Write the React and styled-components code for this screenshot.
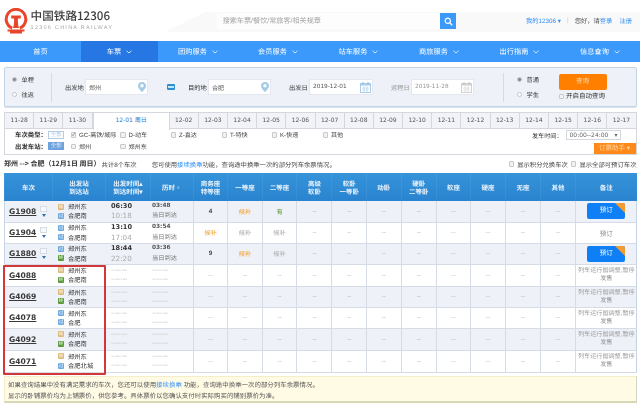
import React from 'react';
import styled, { createGlobalStyle } from 'styled-components';

const Global = createGlobalStyle`
  html, body { margin: 0; padding: 0; background: #fff; }
  body { font-family: "Liberation Sans", "Noto Sans CJK SC", sans-serif; width: 640px; height: 410px; overflow: hidden; text-rendering: geometricPrecision; }
  * { box-sizing: border-box; }
`;

const Page = styled.div`
  position: relative;
  width: 640px;
  height: 410px;
  overflow: hidden;
  color: #333;
  font-size: 6.5px;
  filter: blur(0.25px);
`;

const Header = styled.header`
  position: relative;
  isolation: isolate;
  height: 41px;
  display: flex;
  align-items: center;
  padding-left: 4px;
  &::before {
    content: '';
    position: absolute;
    z-index: -1;
    left: 165px;
    top: 12px;
    width: 475px;
    height: 20px;
    background: #f9f9f9;
    clip-path: polygon(40px 0, 100% 0, 100% 100%, 0 100%);
  }
`;
const LogoBox = styled.div`
  display: flex;
  align-items: center;
  gap: 2.6px;
  width: 212.7px;
`;
const LogoText = styled.div`
  display: flex;
  flex-direction: column;
`;
const LogoTitle = styled.div`
  font-family: "Noto Sans CJK SC", sans-serif;
  font-size: 11.6px;
  line-height: 15.5px;
  font-weight: 500;
  white-space: nowrap;
  color: #3d3d3d;
`;
const LogoSub = styled.div`
  font-size: 5.5px;
  line-height: 7px;
  letter-spacing: 1.25px;
  white-space: nowrap;
  color: #a8a8a8;
`;
const SearchBar = styled.div`
  display: flex;
  width: 239.5px;
  height: 16px;
  margin-top: 1px;
`;
const SearchInput = styled.div`
  flex: 1;
  padding-left: 6px;
  font-size: 7.1px;
  line-height: 16px;
  color: #a4a4a4;
  background: #fdfdfd;
`;
const SearchBtn = styled.div`
  width: 16px;
  height: 16px;
  background: #3b99fc;
  display: flex;
  align-items: center;
  justify-content: center;
`;
const TopLinks = styled.div`
  position: relative;
  margin-left: auto;
  margin-right: 8px;
  display: flex;
  align-items: center;
  white-space: nowrap;
  font-size: 6.3px;
  color: #444;
`;
const Link = styled.span`
  color: #2f8ff5;
`;
const Sep = styled.span`
  margin: 0 6px;
  color: #ccc;
`;
const LinkGap = styled(Link)`
  margin-left: 7px;
`;

const Nav = styled.nav`
  height: 21px;
  display: flex;
  background: #3b99fc;
`;
const NavItem = styled.div`
  width: ${p => p.$w}px;
  display: flex;
  align-items: center;
  justify-content: center;
  gap: 5px;
  font-size: 7.2px;
  color: #fff;
  background: ${p => (p.$active ? '#2676e3' : 'transparent')};
`;

const Panel = styled.section`
  margin: 5px 3.5px 0 4px;
  height: 40px;
  display: flex;
  align-items: center;
  background: #eef1f8;
  border: 1px solid #c3d4e6;
  border-radius: 2px;
  box-shadow: 0 1px 1px #d8e0e8;
`;
const RadioCol = styled.div`
  width: ${p => p.$w}px;
  height: 29px;
  margin-left: ${p => p.$ml || 0}px;
  padding-left: ${p => p.$pad}px;
  display: flex;
  flex-direction: column;
  justify-content: space-around;
  ${p => p.$right && 'border-right: 1px solid #d3dbe6;'}
  ${p => p.$left && 'border-left: 1px solid #d3dbe6;'}
`;
const RadioRow = styled.label`
  display: flex;
  align-items: center;
  gap: 4.5px;
  font-size: 6.2px;
  color: #333;
`;
const Radio = styled.i`
  width: 5px;
  height: 5px;
  border-radius: 50%;
  border: 1px solid #c5c5c5;
  background: ${p => (p.$on ? '#8b8b8b' : '#fff')};
`;
const Field = styled.div`
  display: flex;
  align-items: center;
  margin-left: ${p => p.$ml}px;
`;
const FieldLabel = styled.span`
  width: 20px;
  font-size: 6.3px;
  color: ${p => (p.$dim ? '#999' : '#333')};
  white-space: nowrap;
`;
const FieldBox = styled.div`
  width: ${p => p.$w}px;
  height: 16px;
  padding: 0 1.5px 0 3px;
  display: flex;
  align-items: center;
  justify-content: space-between;
  background: #fff;
  border: 1px solid #e4e8ee;
  font-size: 6px;
  color: ${p => (p.$dim ? '#999' : '#555')};
`;
const DateText = styled.span`
  font-family: "DejaVu Sans", sans-serif;
  font-size: 5.8px;
`;
const SwapIcon = styled.div`
  margin-left: 19px;
  width: 8px;
  height: 6px;
  border-radius: 1px;
  background: #2f8fd0;
  display: flex;
  align-items: center;
  justify-content: center;
  &::after {
    content: '';
    width: 6px;
    height: 2px;
    background: #bfe6f5;
  }
`;
const QueryCol = styled.div`
  display: flex;
  flex-direction: column;
  gap: 3px;
`;
const QueryBtn = styled.div`
  width: 48px;
  height: 16px;
  background: #ff7f00;
  border-radius: 2px;
  color: #ffdcb0;
  font-size: 6.5px;
  text-align: center;
  line-height: 16px;
`;
const Auto = styled.div`
  display: flex;
  align-items: center;
  gap: 2px;
  font-size: 6.5px;
  line-height: 7px;
  white-space: nowrap;
  color: #333;
`;
const Check = styled.i`
  flex: none;
  width: 5.5px;
  height: 5.5px;
  background: #f2f2f2;
  border: 1px solid #c8c8c8;
  border-radius: 1px;
  font-style: normal;
  font-size: 5px;
  line-height: 4px;
  color: #555;
  text-align: center;
`;

const Tabs = styled.div`
  margin: 5px 3.5px 0 4px;
  height: 16px;
  display: flex;
  background: #f1f3f8;
  border: 1px solid #d4d8de;
  border-bottom: none;
`;
const Tab = styled.div`
  flex: ${p => (p.$active ? '0 0 77px' : '1 1 0')};
  margin-top: ${p => (p.$active ? '-1px' : '0')};
  text-align: center;
  font-size: 6px;
  line-height: 15px;
  white-space: nowrap;
  font-family: "DejaVu Sans", "Noto Sans CJK SC", sans-serif;
  color: ${p => (p.$active ? '#2f78d0' : '#555')};
  background: ${p => (p.$active ? '#fff' : 'transparent')};
  border-right: 1px solid #d4d8de;
  ${p => p.$active && 'position: relative; z-index: 1; border-left: 1px solid #d4d8de; border-top: 1px solid #d4d8de; height: 18px;'}
  &:last-child { border-right: none; }
`;

const Filters = styled.div`
  position: relative;
  margin: 0 3.5px 0 4px;
  height: 27px;
  padding-left: 10px;
  border: 1px solid #d4d8de;
`;
const FilterRow = styled.div`
  display: flex;
  align-items: center;
  height: 11.5px;
`;
const FilterLabel = styled.b`
  width: 33px;
  font-size: 6.4px;
  white-space: nowrap;
  color: #333;
  font-family: "Noto Sans CJK SC", sans-serif;
`;
const AllBtn = styled.span`
  width: 16.3px;
  height: 8px;
  margin-right: 6.7px;
  border: 1px solid ${p => (p.$fill ? '#6da2dc' : '#b5cce6')};
  background: ${p => (p.$fill ? '#6da2dc' : '#fff')};
  color: ${p => (p.$fill ? '#dfeaf8' : '#b5cce6')};
  font-size: 5.5px;
  line-height: 6px;
  text-align: center;
`;
const Opt = styled.span`
  width: ${p => p.$w}px;
  display: flex;
  align-items: center;
  gap: 2.5px;
  font-size: 6.1px;
  white-space: nowrap;
  color: #444;
`;
const TimeBox = styled.div`
  position: absolute;
  top: 1.2px;
  right: 15px;
  display: flex;
  align-items: center;
  gap: 3px;
  font-size: 6.1px;
  white-space: nowrap;
  color: #333;
`;
const TimeSelect = styled.div`
  width: 55px;
  height: 10px;
  padding: 0 2px 0 3px;
  display: flex;
  align-items: center;
  justify-content: space-between;
  border: 1px solid #d4d8de;
  color: #666;
  font-family: "DejaVu Sans", sans-serif;
  font-size: 6px;
`;
const HelperBtn = styled.div`
  position: absolute;
  right: 0;
  bottom: 0;
  width: 42px;
  height: 11px;
  background: #ff8a1a;
  color: #ffd9ac;
  font-size: 6.5px;
  line-height: 11px;
  text-align: center;
`;

const InfoLine = styled.div`
  margin: 0 3.5px 0 4px;
  height: 18px;
  display: flex;
  align-items: center;
  font-size: 6.35px;
  color: #444;
  white-space: nowrap;
`;
const InfoHead = styled.b`
  font-size: 7px;
  margin-right: 1px;
  color: #333;
  font-family: "Noto Sans CJK SC", sans-serif;
`;
const InfoTip = styled.span`
  margin-left: 15px;
`;
const InfoChecks = styled.div`
  margin-left: auto;
  display: flex;
  align-items: center;
  gap: 3px;
`;

const Table = styled.div`
  margin-left: 4px;
  width: 632.7px;
`;
const cols = '48px 53px 45px 42.7px 34.5px 34.5px 34.8px 35px 34.5px 34.7px 35.3px 34px 35px 35px 35px 61.7px';
const Head = styled.div`
  display: grid;
  grid-template-columns: ${cols};
  height: 28px;
  background: linear-gradient(#3594da, #2a83cf);
  font-size: 6.5px;
  font-weight: bold;
  font-family: "Noto Sans CJK SC", sans-serif;
`;
const HeadCell = styled.div`
  display: flex;
  align-items: center;
  justify-content: center;
  text-align: center;
  white-space: nowrap;
  line-height: 8.5px;
  color: #e8f2fb;
  border-left: 1px solid rgba(255, 255, 255, 0.06);
`;
const Row = styled.div`
  display: grid;
  grid-template-columns: ${cols};
  height: ${p => p.$h}px;
  background: ${p => (p.$odd ? '#eef1f8' : '#fff')};
  border-bottom: 1px solid #d6dce6;
  box-shadow: inset 1px 0 #c9d5e4, inset -1px 0 #c3d2e4;
`;
const Cell = styled.div`
  display: flex;
  align-items: center;
  justify-content: center;
  border-left: 1px solid #d6dce6;
  font-size: 6.3px;
  color: ${p => p.$color || '#b4b4b4'};
  font-weight: ${p => (p.$bold ? 'bold' : 'normal')};
  text-align: center;
`;
const TrainCell = styled.div`
  display: flex;
  align-items: center;
  padding-left: 5px;
  gap: 4px;
`;
const TrainNo = styled.span`
  font-family: "DejaVu Sans", sans-serif;
  font-size: 7.6px;
  font-weight: bold;
  color: #3a3a3a;
  text-decoration: underline;
`;
const TrainIcons = styled.div`
  display: flex;
  flex-direction: column;
  align-items: center;
  gap: 2px;
`;
const ListIcon = styled.i`
  width: 7px;
  height: 6px;
  border: 1px solid #d4dce6;
  background: #f8f9fb;
`;
const DownArrow = styled.i`
  width: 0;
  height: 0;
  border-left: 2.5px solid transparent;
  border-right: 2.5px solid transparent;
  border-top: 3px solid #2a6fb8;
`;
const Stack = styled.div`
  display: flex;
  flex-direction: column;
  justify-content: center;
  gap: 0.4px;
  padding-left: ${p => p.$pad}px;
`;
const StationLine = styled.div`
  display: flex;
  align-items: center;
  gap: 4px;
  height: 9px;
  font-size: 6.3px;
  color: #333;
  white-space: nowrap;
`;
const Tag = styled.i`
  width: 6px;
  height: 6px;
  border-radius: 1px;
  font-style: normal;
  font-size: 4.5px;
  line-height: 6px;
  text-align: center;
  color: #fff;
  background: ${p => p.$bg};
`;
const Time = styled.div`
  height: 9px;
  line-height: 9px;
  font-family: "DejaVu Sans", sans-serif;
  font-size: ${p => (p.$b ? '6.6px' : '7.2px')};
  font-weight: ${p => (p.$b ? 'bold' : 'normal')};
  color: ${p => (p.$b ? '#333' : '#aaa')};
`;
const Dur = styled.div`
  height: 9px;
  line-height: 9px;
  font-size: ${p => (p.$cn ? '6.25px' : '5.8px')};
  font-family: ${p => (p.$cn ? 'inherit' : '"DejaVu Sans", sans-serif')};
  font-weight: ${p => (p.$cn ? 'normal' : 'bold')};
  color: ${p => (p.$cn ? '#777' : '#555')};
`;
const Dash = styled.div`
  height: 9px;
  line-height: 9px;
  font-size: 7px;
  white-space: nowrap;
  color: #c4c4c4;
`;
const Book = styled.div`
  position: relative;
  width: 38px;
  height: 16px;
  overflow: hidden;
  background: #0f7ff5;
  border-radius: 2px;
  color: #fff;
  font-size: 6.5px;
  line-height: 16px;
  text-align: center;
  &::after {
    content: '';
    position: absolute;
    top: 0;
    right: 0;
    border-top: 10px solid #f29b30;
    border-left: 10px solid transparent;
  }
`;
const BookText = styled.span`
  color: #888;
  font-size: 6.5px;
`;
const Note = styled.div`
  font-size: 6.1px;
  line-height: 8px;
  color: #999;
`;

const Notice = styled.div`
  margin: 3.5px 3.5px 0 4px;
  height: 27px;
  padding: 3px 0 0 3px;
  background: #fffbe5;
  border: 1px solid #f3edc8;
  border-bottom: 2px solid #d8d8b8;
  border-right: 1px solid #cfd6c8;
  font-size: 6.45px;
  line-height: 11px;
  color: #555;
  white-space: nowrap;
`;
const RedBox = styled.div`
  position: absolute;
  left: 3px;
  top: 265px;
  width: 103px;
  height: 110px;
  border: 2px solid #d4373a;
  border-radius: 1px;
  pointer-events: none;
`;

const navItems = [['首页', 81], ['车票', 77, true], ['团购服务', 80], ['会员服务', 80], ['站车服务', 81], ['商旅服务', 80], ['出行指南', 81], ['信息查询', 80]];
const dates = ['11-28', '11-29', '11-30', '12-01 周日', '12-02', '12-03', '12-04', '12-05', '12-06', '12-07', '12-08', '12-09', '12-10', '12-11', '12-12', '12-13', '12-14', '12-15', '12-16', '12-17'];
const headers = ['车次', '出发站\n到达站', '出发时间▴\n到达时间▾', '历时▫', '商务座\n特等座', '一等座', '二等座', '高级\n软卧', '软卧\n一等卧', '动卧', '硬卧\n二等卧', '软座', '硬座', '无座', '其他', '备注'];

const TAN = '#dcb878', BLUE = '#6ea8dc', GREEN = '#5a9a3a';
const rows = [
  { no: 'G1908', t1: [TAN, '始'], t2: [BLUE, '过'], from: '郑州东', to: '合肥南', dep: '06:30', arr: '10:18', dur: '03:48', sw: '4', first: '候补', second: '有', book: true },
  { no: 'G1904', t1: [BLUE, '过'], t2: [BLUE, '过'], from: '郑州东', to: '合肥南', dep: '13:10', arr: '17:04', dur: '03:54', sw: '候补', first: '候补', second: '候补', bookText: true },
  { no: 'G1880', t1: [BLUE, '过'], t2: [GREEN, '终'], from: '郑州东', to: '合肥南', dep: '18:44', arr: '22:20', dur: '03:36', sw: '9', first: '候补', second: '候补', book: true },
  { no: 'G4088', t1: [TAN, '始'], t2: [GREEN, '终'], from: '郑州东', to: '合肥南' },
  { no: 'G4069', t1: [TAN, '始'], t2: [GREEN, '终'], from: '郑州东', to: '合肥南' },
  { no: 'G4078', t1: [BLUE, '过'], t2: [BLUE, '过'], from: '郑州东', to: '合肥' },
  { no: 'G4092', t1: [TAN, '始'], t2: [GREEN, '终'], from: '郑州东', to: '合肥南' },
  { no: 'G4071', t1: [TAN, '始'], t2: [BLUE, '过'], from: '郑州东', to: '合肥北城' },
];
const heights = [21.5, 21, 21, 22, 21.5, 20.5, 22, 22];

const Chevron = () => (
  <svg width="6" height="4" viewBox="0 0 6 4"><path d="M0.5 0.8 L3 3 L5.5 0.8" fill="none" stroke="#cfe4fb" strokeWidth="1" /></svg>
);

const Pin = () => (
  <svg width="8" height="10" viewBox="0 0 8 10">
    <path d="M4 0 C1.6 0 0 1.7 0 3.9 C0 6.4 4 10 4 10 C4 10 8 6.4 8 3.9 C8 1.7 6.4 0 4 0 Z" fill="#a3cbe6" />
    <circle cx="4" cy="3.8" r="1.7" fill="#fff" />
  </svg>
);

const Calendar = ({ dim }) => (
  <svg width="11" height="11" viewBox="0 0 11 11">
    <rect x="0.5" y="1.5" width="10" height="9" fill="none" stroke={dim ? '#d0d0d0' : '#a9cbe6'} />
    <rect x="0.5" y="1.5" width="10" height="2" fill={dim ? '#d0d0d0' : '#a9cbe6'} />
    <path d="M2 6 H9 M2 8 H9 M4 4 V10 M7 4 V10" stroke={dim ? '#dadada' : '#bcd8ec'} strokeWidth="0.8" />
    <path d="M3 0 V2 M8 0 V2" stroke={dim ? '#c0c0c0' : '#8fbadc'} />
  </svg>
);

const Logo = () => (
  <svg width="24" height="26" viewBox="0 0 24 26">
    <path d="M8.2 20.2 A9.8 9.8 0 1 1 15.8 20.2" fill="none" stroke="#e8462a" strokeWidth="3" />
    <path d="M7.2 7.6 H16.8 V10.4 H14 C13.6 13 14 17 15 20 H9 C10 17 10.4 13 10 10.4 H7.2 Z" fill="#e8462a" />
    <path d="M3.5 21.4 H20.5 V23.4 H18 V25.6 H6 V23.4 H3.5 Z" fill="#e8462a" />
  </svg>
);

const SearchIcon = () => (
  <svg width="9" height="9" viewBox="0 0 9 9">
    <circle cx="3.8" cy="3.8" r="2.6" fill="none" stroke="#fff" strokeWidth="1.2" />
    <path d="M5.8 5.8 L8.2 8.2" stroke="#fff" strokeWidth="1.3" />
  </svg>
);

function seat(v, k, i) {
  if (v === '有') return <Cell key={k} $color="#5a9a3a">有</Cell>;
  if (v === '4' || v === '9') return <Cell key={k} $color="#444" $bold>{v}</Cell>;
  if (v === '候补') {
    const orange = (i === 1 && k === 0) || (i !== 1 && k === 1);
    return <Cell key={k} $color={orange ? '#f0a030' : '#aaa'}>候补</Cell>;
  }
  return <Cell key={k}>--</Cell>;
}

export default function App() {
  return (
    <Page>
      <Global />
      <Header>
        <LogoBox>
          <Logo />
          <LogoText>
            <LogoTitle>中国铁路12306</LogoTitle>
            <LogoSub>12306 CHINA RAILWAY</LogoSub>
          </LogoText>
        </LogoBox>
        <SearchBar>
          <SearchInput>搜索车票/餐饮/常旅客/相关规章</SearchInput>
          <SearchBtn><SearchIcon /></SearchBtn>
        </SearchBar>
        <TopLinks>
          <Link>我的12306 ▾</Link>
          <Sep>|</Sep>
          您好，请<Link>登录</Link><LinkGap>注册</LinkGap>
        </TopLinks>
      </Header>

      <Nav>
        {navItems.map(([name, w, active], i) => (
          <NavItem key={name} $w={w} $active={active}>
            {name}{i > 0 && <Chevron />}
          </NavItem>
        ))}
      </Nav>

      <Panel>
        <RadioCol $w={47} $pad={7} $right>
          <RadioRow><Radio $on />单程</RadioRow>
          <RadioRow><Radio />往返</RadioRow>
        </RadioCol>
        <Field $ml={13}>
          <FieldLabel>出发地</FieldLabel>
          <FieldBox $w={63}>郑州<Pin /></FieldBox>
        </Field>
        <SwapIcon />
        <Field $ml={13}>
          <FieldLabel>目的地</FieldLabel>
          <FieldBox $w={63}>合肥<Pin /></FieldBox>
        </Field>
        <Field $ml={18}>
          <FieldLabel>出发日</FieldLabel>
          <FieldBox $w={64}><DateText>2019-12-01</DateText><Calendar /></FieldBox>
        </Field>
        <Field $ml={18}>
          <FieldLabel $dim>返程日</FieldLabel>
          <FieldBox $w={63} $dim><DateText>2019-11-28</DateText><Calendar dim /></FieldBox>
        </Field>
        <RadioCol $w={55.5} $pad={13} $ml={29} $left>
          <RadioRow><Radio $on />普通</RadioRow>
          <RadioRow><Radio />学生</RadioRow>
        </RadioCol>
        <QueryCol>
          <QueryBtn>查询</QueryBtn>
          <Auto><Check />开启自动查询</Auto>
        </QueryCol>
      </Panel>

      <Tabs>
        {dates.map((d, i) => <Tab key={d} $active={i === 3}>{d}</Tab>)}
      </Tabs>

      <Filters>
        <FilterRow>
          <FilterLabel>车次类型：</FilterLabel>
          <AllBtn>全部</AllBtn>
          <Opt $w={49.5}><Check>✓</Check>GC-高铁/城际</Opt>
          <Opt $w={50.5}><Check />D-动车</Opt>
          <Opt $w={51}><Check />Z-直达</Opt>
          <Opt $w={50}><Check />T-特快</Opt>
          <Opt $w={51}><Check />K-快速</Opt>
          <Opt $w={30}><Check />其他</Opt>
        </FilterRow>
        <FilterRow>
          <FilterLabel>出发车站：</FilterLabel>
          <AllBtn $fill>全部</AllBtn>
          <Opt $w={49.5}><Check />郑州</Opt>
          <Opt $w={50}><Check />郑州东</Opt>
        </FilterRow>
        <TimeBox>
          发车时间：
          <TimeSelect>00:00--24:00<span>▾</span></TimeSelect>
        </TimeBox>
        <HelperBtn>订票助手 ▾</HelperBtn>
      </Filters>

      <InfoLine>
        <InfoHead>郑州 --&gt; 合肥（12月1日 周日）</InfoHead>
        共计8个车次
        <InfoTip>您可使用<Link>接续换乘</Link>功能，查询途中换乘一次的部分列车余票情况。</InfoTip>
        <InfoChecks>
          <Check />显示积分兑换车次
          <Check />显示全部可预订车次
        </InfoChecks>
      </InfoLine>

      <Table>
        <Head>
          {headers.map((h, i) => (
            <HeadCell key={i}>
              <span>{h.split('\n').map((t, j) => <React.Fragment key={j}>{j > 0 && <br />}{t}</React.Fragment>)}</span>
            </HeadCell>
          ))}
        </Head>
        {rows.map((r, i) => (
          <Row key={r.no} $odd={i % 2 === 0} $h={heights[i]}>
            <TrainCell>
              <TrainNo>{r.no}</TrainNo>
              {r.dep && <TrainIcons><ListIcon /><DownArrow /></TrainIcons>}
            </TrainCell>
            <Stack $pad={6}>
              <StationLine><Tag $bg={r.t1[0]}>{r.t1[1]}</Tag>{r.from}</StationLine>
              <StationLine><Tag $bg={r.t2[0]}>{r.t2[1]}</Tag>{r.to}</StationLine>
            </Stack>
            <Stack $pad={6}>
              {r.dep ? <><Time $b>{r.dep}</Time><Time>{r.arr}</Time></> : <><Dash>-------</Dash><Dash>-------</Dash></>}
            </Stack>
            <Stack $pad={2}>
              {r.dur ? <><Dur>{r.dur}</Dur><Dur $cn>当日到达</Dur></> : <><Dash>-------</Dash><Dash>-------</Dash></>}
            </Stack>
            {[r.sw, r.first, r.second].map((v, k) => seat(v, k, i))}
            {Array.from({ length: 8 }).map((_, k) => <Cell key={k}>--</Cell>)}
            <Cell>
              {r.book && <Book>预订</Book>}
              {r.bookText && <BookText>预订</BookText>}
              {!r.book && !r.bookText && <Note>列车运行图调整,暂停发售</Note>}
            </Cell>
          </Row>
        ))}
      </Table>

      <Notice>
        如果查询结果中没有满足需求的车次，您还可以使用<Link>接续换乘</Link> 功能，查询途中换乘一次的部分列车余票情况。<br />
        显示的卧铺票价均为上铺票价，供您参考。具体票价以您确认支付时实际购买的铺别票价为准。
      </Notice>

      <RedBox />
    </Page>
  );
}
